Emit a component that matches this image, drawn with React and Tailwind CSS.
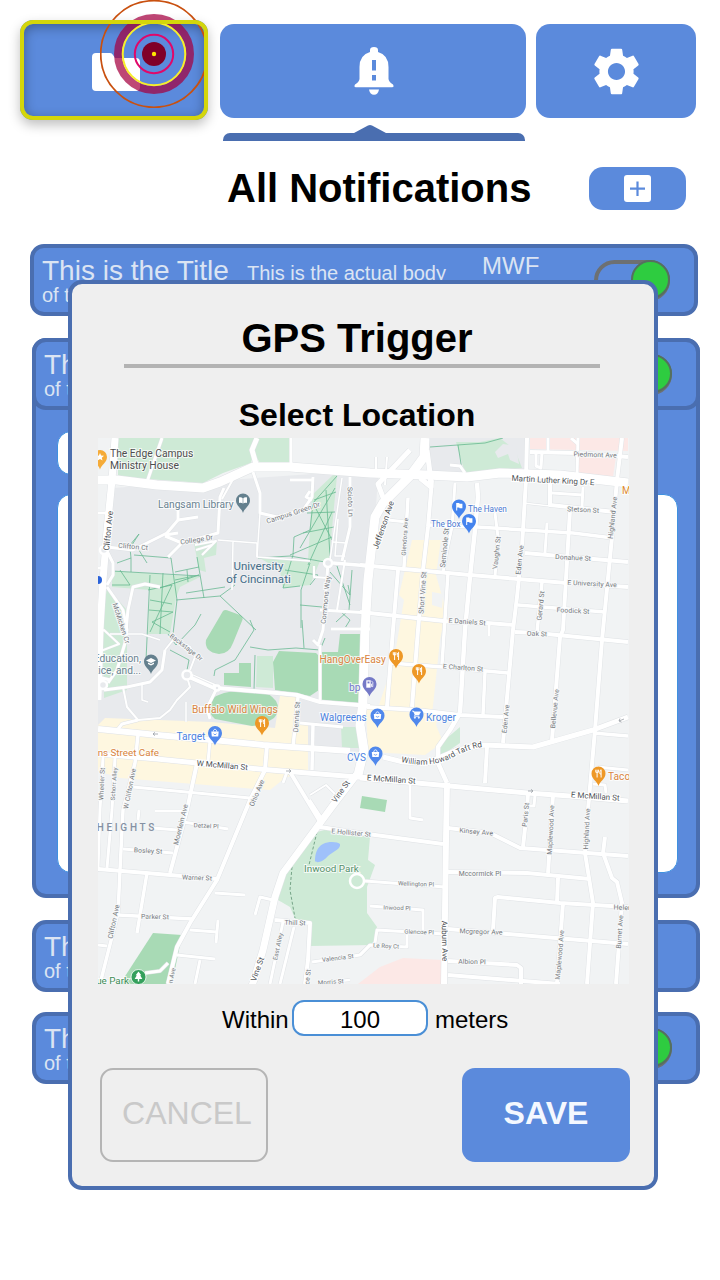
import React from "react";
import { MdSettings } from "react-icons/md";

/* Map geometry: [stroke width, points] */
const ROADS = [
  [1.5, "260,513 257,557"], [1.5, "218,540 257,543 257,557 310,561"], [1.5, "233,542 232,590"],
  [1.5, "342,478 330,560"], [1.5, "338,519 335,556 345,556"], [1.5, "333,542 346,543"],
  [1.5, "110,634 142,634 160,640"], [1.5, "142,685 142,700 148,702"], [1.5, "186,702 186,722"],
  [3, "162,438 147,482"], [5, "257,438 252,450 256,464"], [3, "291,438 291,467"],
  [3, "253,472 260,493 260,513 277,517 303,510 312,497 313,477"], [3, "290,480 313,480"],
  [3, "312,500 306,497 310,491"],
  [3, "98,513 108,513"], [3, "98,568 104,568"], [3, "107,547 133,550 167,533 178,520 178,503"], [3, "178,520 198,517"],
  [3, "165,535 178,533"], [3, "165,536 182,543 168,557"], [3, "182,543 218,533 220,497 224,488"],
  [2, "222,499 227,490 236,474"], [2, "195,545 216,541 202,555"], [2, "196,550 212,545"],
  [3, "106,549 113,563 113,575 107,585"], [3, "107,587 123,610 127,630 125,643 117,670 108,683"],
  [3, "104,690 102,678 110,680"], [3, "160,587 145,584 133,587 128,610 126,630"],
  [3, "328,563 323,630 318,645 313,640"], [3.5, "333,563 370,566"], [3, "350,477 350,527 342,561"],
  [3, "320,610 370,613"], [2, "314,566 314,577 328,578"], [2, "345,560 337,610"],
  [2, "98,634 104,630 119,644 98,652"],
  [2, "165,650 173,640 190,647 195,657 190,670"], [3, "165,650 162,670 150,682 127,687 104,690"],
  [2, "123,687 127,707 138,720 160,718 170,710 177,700 190,687 187,677"], [3, "138,720 122,724 118,729"],
  [6, "187,675 217,688"], [4, "217,688 277,693 297,695 320,702 370,706"], [3, "217,688 207,708 210,719"],
  [3, "320,645 320,700"], [3, "331,629 370,629"],
  [6, "98,729 157,735 223,741 263,745 350,751"], [5, "98,754 157,759 197,763 270,770 370,778"],
  [3.5, "138,735 135,763 123,810 120,870 118,913 100,984"], [3, "103,757 100,810 98,868"], [3, "115,757 112,810 107,868"],
  [3, "210,740 208,762"], [4, "267,745 265,770 250,800 217,880 190,923 177,947 168,984"],
  [3.5, "298,697 293,747"], [3.5, "313,725 312,770"], [3, "300,723 343,727"],
  [4, "197,763 187,810 170,873"], [3, "133,787 250,798"], [4, "290,772 322,825"], [3, "287,772 283,783"],
  [2, "310,795 326,785 335,794"], [4, "309,800 322,820"],
  [5, "410,450 378,484 384,500"], [5, "427,450 430,473 431,487 420,478"], [2, "387,457 385,485"], [2, "376,457 376,470"],
  [4, "432,480 428,527 423,570 418,630 412,707"], [3, "455,483 452,527 447,550 443,573"],
  [3.5, "448,573 442,664"], [4.5, "477,483 478,497 475,530 470,577 465,630 460,713"],
  [4.5, "460,713 450,730 438,747 438,763 447,783"], [3, "495,513 498,537 495,577"],
  [4, "527,438 526,480 522,547 517,597 513,630 503,743"], [3.5, "428,525 477,527 573,533 613,538"],
  [4, "360,565 470,575 567,583 628,587"], [4, "360,612 453,622 487,623 515,625"], [4, "515,632 537,633 628,642"],
  [3.5, "390,663 443,667 508,673"], [4, "367,707 417,710 460,715 503,717"], [3.5, "485,672 483,715"],
  [3, "489,625 489,636"], [4, "398,570 393,630 387,707"], [3.5, "408,498 404,567"], [3, "388,520 407,522"],
  [4, "525,553 628,562"], [3, "547,523 545,553"], [4, "570,510 563,630 560,637 552,740"],
  [4, "622,438 617,480 612,537 603,630 602,640 595,730 588,810 585,853 593,903 587,984"],
  [4, "530,452 577,453 628,457"], [3, "536,452 536,466 541,468 542,452"], [3, "578,438 577,475"], [3, "548,438 548,452"],
  [3, "571,438 578,444"], [4, "550,482 550,505 615,512"], [3, "552,493 583,495"], [3, "583,487 582,507"],
  [1.5, "523,503 550,506"], [3, "450,465 460,466 465,473"],
  [3.5, "518,605 605,612"], [3.5, "542,582 537,632"],
  [5, "383,757 403,762 427,763 457,750 483,745 533,747 593,730 628,717"],
  [4, "487,747 485,783"], [3, "410,783 410,818 423,820"], [3.5, "593,733 628,736"], [3, "597,767 628,770"],
  [3, "593,784 605,785 606,793"], [4, "528,793 527,810 523,847"], [3, "535,795 534,806 528,806"], [4, "553,795 548,873"],
  [5, "360,778 417,783 527,793 570,796 628,801"],
  [4, "320,827 360,833 443,844"], [4, "448,828 490,833 520,848 628,856"], [4, "448,872 527,873 590,879"],
  [4, "558,878 557,902"], [4, "493,930 495,898 498,897 560,903 628,907"], [3, "365,881 445,887"],
  [3, "370,906 423,910 423,930"], [3, "375,943 377,930 445,934"], [3, "360,955 370,945 407,947 407,933"],
  [4, "448,929 628,944"], [4, "448,961 517,965 521,968 521,984"], [4, "448,975 560,984"], [4, "563,903 557,984"],
  [4, "605,837 603,853 612,878 617,882 622,903 616,984"],
  [4, "98,869 218,879"], [3, "123,849 173,853"], [3, "183,822 228,829"], [3, "153,828 177,830"], [3, "139,810 138,820"],
  [3, "155,811 182,811"], [3.5, "147,873 137,933"], [3.5, "118,915 193,919"], [3, "168,963 160,971 145,973"],
  [3, "215,893 245,895"], [3, "190,930 217,932"], [3, "218,920 216,943"], [3, "177,955 215,959"], [3, "200,960 195,984"],
  [3, "98,945 107,946"], [4, "275,920 310,923 308,960 305,984"], [3, "283,922 270,984"], [3, "294,927 280,984"],
  [3, "312,962 360,955 370,945"], [3, "255,915 260,897 273,900"], [2.5, "318,983 350,980"],
  [6, "447,783 446,840 444,984"],
  [7, "357,774 337,800 320,823 283,873 275,897 263,950 252,986"],
  [7, "115,438 112,480 107,530 103,580 100,630 98,700"],
  [9, "98,480 117,480 157,485 203,488 220,482 253,467 290,467 370,473 427,475 467,477 500,473 560,475 628,483"],
  [9, "425,438 424,457 410,476 383,503 375,517 368,580 365,630 363,703 360,725 364,750 358,775"],
];

const AREAS = [
  ["#e8eaed", "98,489 370,470 378,478 362,700 360,752 98,726"],
  ["#e8eaed", "427,438 527,438 527,472 432,474"],
  ["#f1f3f4", "98,484 108,484 102,620 98,620"],
  ["#ceead6", "118,438 257,438 251,463 223,473 203,483 118,477"],
  ["#ceead6", "254,438 290,438 290,464 260,463 253,452"],
  ["#ceead6", "456,442 480,442 500,438 515,450 522,468 465,473"],
  ["#e8eaed", "495,452 503,444 516,446 519,464 510,460 508,454 498,458"],
  ["#fce8e6", "530,438 628,438 628,451 530,449"], ["#fce8e6", "579,454 616,456 613,477 577,474"],
  ["#ceead6", "333,475 337,475 329,561 308,560 312,495"], ["#ceead6", "258,557 320,561 310,585 283,588 280,570"],
  ["#ceead6", "112,571 200,577 180,587 176,598 170,634 148,634 150,590 112,587"],
  ["#ceead6", "107,588 127,610 127,690 104,698 102,620"], ["#ceead6", "194,543 217,541 216,555 204,558 206,572 199,570"],
  ["#a8dab5", "239,663 251,663 251,687 224,685 224,673 239,673"], ["#ceead6", "257,656 273,656 273,688 256,687"],
  ["#a8dab5", "279,651 316,653 319,656 319,690 310,696 275,690 273,662"], ["#a8dab5", "340,634 362,634 360,703 321,700 321,652 338,652"],
  ["#fef7e0", "105,718 212,722 275,728 280,696 297,697 295,722 308,724 308,770 285,778 270,790 120,778 98,771 98,725"],
  ["#fef7e0", "412,540 441,540 436,575 446,610 440,640 432,715 378,708 394,660 404,600 399,595"],
  ["#f1f3f4", "432,592 443,594 442,608 432,605"],
  ["#fef7e0", "366,708 438,714 436,725 443,742 425,755 368,752"],
  ["#ceead6", "341,727 358,727 360,748 342,748"], ["#ceead6", "460,727 460,743 438,758 440,744"],
  ["#a8dab5", "362,796 387,800 385,812 360,808"],
  ["#ceead6", "317,832 332,828 370,837 368,860 375,865 367,887 367,913 377,927 373,945 310,946 308,925 297,923 290,907 278,900 283,877"],
  ["#a8dab5", "153,933 182,935 172,984 120,984"],
  ["#fce8e6", "358,984 380,967 403,958 443,960 443,984"],
];

const PATHS = [
  "117,563 131,558 130,548 139,534 130,545", "131,558 131,572", "137,547 147,563", "134,555 171,558 177,600 173,634",
  "112,571 200,576", "197,557 204,598", "175,572 199,567", "175,580 199,575 160,588", "187,570 188,582", "148,590 172,585 150,632",
  "150,600 172,604", "149,610 173,612 152,622 170,632", "150,575 146,660", "163,573 160,634",
  "176,600 220,596 256,630", "220,596 235,585", "186,593 225,587",
  "120,570 130,585 112,585", "337,476 313,503 310,530 294,537 293,555 283,588 300,586", "314,500 336,492",
  "307,513 335,512", "303,533 334,527", "290,555 332,537", "335,488 300,548", "332,512 308,565", "326,490 330,556", "313,503 332,540",
  "258,558 290,556 325,562", "310,585 318,575 285,570", "310,563 301,590 301,628", "300,605 322,607", "330,572 350,595 348,585", "337,566 350,605",
  "352,570 349,610 336,622", "341,612 350,620 345,628", "170,650 189,660 187,670", "168,634 176,645 195,625 201,614",
  "250,620 254,630 235,660 215,670 214,676", "250,647 268,650 296,648 320,650", "255,655 254,690", "302,620 304,648", "320,650 325,638",
  "430,447 485,443 503,438", "458,445 462,470",
];

/* [text, x, y, rotation, size, kind] */
const LABELS = [
  ["Clifton Ave", 111, 531, -84, 8.3, "m"], ["Clifton Ct", 133, 549, 5, 7, "s"], ["College Dr", 197, 542, -9, 7, "s"],
  ["Campus Green Dr", 294, 515, -18, 7, "s"], ["Scioto Ln", 348, 502, 88, 7, "s"], ["Commons Way", 328, 600, -84, 7, "s"],
  ["McMicken Cr", 119, 624, 72, 7, "s"], ["Backstage Dr", 185, 649, 38, 6.5, "s"], ["Dennis St", 299, 717, -86, 7, "s"],
  ["Jefferson Ave", 386, 526, -71, 8.2, "m"], ["Glendora Ave", 407, 537, -86, 6.2, "s"], ["Seminole St", 447, 548, -84, 7.3, "s"],
  ["Short Vine St", 425, 593, -86, 7.1, "s"], ["Vaughn St", 499, 553, -84, 7, "s"], ["Eden Ave", 522, 560, -84, 7, "s"],
  ["Gerard St", 543, 606, -84, 7, "s"], ["Highland Ave", 615, 518, -84, 7, "s"], ["Piedmont Ave", 595, 457, 2, 6.8, "s"],
  ["Martin Luther King Dr E", 553, 483, 3, 8.1, "m"], ["Stetson St", 583, 512, 3, 6.8, "s"], ["Donahue St", 573, 560, 3, 6.8, "s"],
  ["E University Ave", 592, 586, 3, 6.8, "s"], ["Foodick St", 573, 613, 3, 6.8, "s"], ["E Daniels St", 467, 624, 4, 6.8, "s"],
  ["Oak St", 537, 636, 2, 6.8, "s"], ["E Charlton St", 463, 670, 4, 6.8, "s"], ["Eden Ave", 508, 719, -84, 6.8, "s"],
  ["Bellevue Ave", 557, 709, -84, 6.8, "s"],
  ["W McMillan St", 222, 768, 5, 8, "m"], ["E McMillan St", 391, 782, 4, 8, "m"], ["E McMillan St", 595, 799, 4, 8, "m"],
  ["Vine St", 343, 793, -54, 8, "m"], ["Vine St", 260, 970, -70, 8, "m"], ["Ohio Ave", 259, 794, -67, 7, "s"],
  ["Wheeler St", 104, 784, -87, 6.6, "s"], ["Schorr Alley", 116, 784, -86, 6, "s"], ["W Clifton Ave", 132, 789, -79, 6.7, "s"],
  ["Moerlein Ave", 183, 825, -76, 7, "s"], ["Detzel Pl", 206, 828, 3, 6.2, "s"], ["Bosley St", 148, 853, 3, 6.7, "s"],
  ["Warner St", 197, 880, 2, 6.7, "s"], ["Parker St", 155, 919, 1, 6.7, "s"], ["Clifton Ave", 116, 922, -78, 7, "s"],
  ["East Alley", 280, 947, -78, 6.2, "s"], ["Thill St", 295, 925, 2, 6.7, "s"], ["Valencia St", 338, 960, -7, 6.2, "s"],
  ["ce St", 310, 977, -84, 6.7, "s"], ["n Ave", 174, 976, -78, 6.2, "s"], ["Morris St", 331, 984, -4, 6.2, "s"],
  ["E Hollister St", 351, 835, 5, 6.7, "s"], ["Kinsey Ave", 476, 834, 5, 6.8, "s"], ["Mccormick Pl", 480, 876, 0, 6.8, "s"],
  ["Wellington Pl", 416, 886, 2, 6, "s"], ["Inwood Pl", 397, 910, 2, 6, "s"], ["Glencoe Pl", 419, 934, 2, 6, "s"],
  ["Le Roy Ct", 386, 948, 3, 6, "s"], ["Auburn Ave", 442, 941, 89, 8, "m"], ["Mcgregor Ave", 481, 934, 2, 6.8, "s"],
  ["Albion Pl", 472, 964, 1, 6.8, "s"], ["Paris St", 528, 815, -84, 6.8, "s"], ["Maplewood Ave", 553, 830, -87, 6.8, "s"],
  ["Highland Ave", 589, 829, -87, 6.8, "s"], ["Maplewood Ave", 562, 955, -85, 6.8, "s"], ["Burnet Ave", 622, 932, -86, 6.8, "s"],
  ["Helen St", 627, 910, 2, 7, "s"],
];

const PLACES = [
  ["The Edge Campus", 110, 456.5, 10.3, "#4e4e4e", "start"], ["Ministry House", 110, 468.5, 10.3, "#4e4e4e", "start"],
  ["Langsam Library", 158, 507.5, 10.2, "#6a8391", "start"], ["The Haven", 468, 512, 8.2, "#4b78d2", "start"],
  ["The Box", 431, 527, 8.2, "#4b78d2", "start"], ["HangOverEasy", 319.5, 662.5, 10.2, "#d98441", "start"],
  ["bp", 349, 691, 10.2, "#7276c9", "start"], ["Walgreens", 320, 721, 10, "#4a82df", "start"],
  ["Kroger", 426, 720.5, 10.1, "#4a82df", "start"], ["CVS", 347, 761, 10, "#4a82df", "start"],
  ["Target", 176.5, 739.5, 10.2, "#4a82df", "start"], ["Buffalo Wild Wings", 192, 712.5, 10.2, "#d98441", "start"],
  ["ns Street Cafe", 159, 756, 9.8, "#d98441", "end"], ["Taco", 608, 780, 10.2, "#d98441", "start"],
  ["Education,", 141, 662, 10.2, "#6a8391", "end"], ["tice, and...", 141, 673.5, 10.2, "#6a8391", "end"],
  ["M", 622, 494, 10, "#e08a2e", "start"], ["Inwood Park", 304, 872, 9.9, "#55906a", "start"],
  ["ue Park", 129, 984, 9.8, "#3d8b55", "end"],
];

const ORANGE = "#ee9826";
const BLUE = "#5088ec";
const SLATE = "#64808e";
const PINS = [
  [100, 457, "#f5ab38", "star"], [243, 500.5, SLATE, "book"], [151, 661.5, SLATE, "school"], [459, 506.5, "#4584ee", "flag"],
  [469, 521, "#4584ee", "flag"], [396, 656, ORANGE, "food"], [419, 671, ORANGE, "food"], [369.5, 684, "#7479c7", "gas"],
  [377.5, 715.5, BLUE, "bag"], [416.5, 714.5, BLUE, "cart"], [375.5, 753.5, BLUE, "bag"], [215, 733, BLUE, "bag"],
  [262, 723, ORANGE, "food"], [598.5, 773.5, ORANGE, "food"],
];

const GLYPHS = {
  star: <path d="M0-4 1.1-1.4 4-1.2 1.8.7 2.5 3.5 0 2-2.5 3.5-1.8.7-4-1.2-1.1-1.4Z" fill="#fff" />,
  book: <path d="M-4-3C-2.5-3.4-1-3-.3-2.3V3C-1 2.3-2.5 2.2-4 2.5ZM4-3C2.5-3.4 1-3 .3-2.3V3C1 2.3 2.5 2.2 4 2.5Z" fill="#fff" />,
  school: <path d="M0-3.5 5-1 0 1.5-5-1ZM-3 1 0 2.5 3 1V2.5L0 4-3 2.5Z" fill="#fff" />,
  flag: <path d="M-2.8-3.5H.2L.6-2.7H3.4V1.8H.6L.2 1H-1.8V4H-2.8Z" fill="#fff" />,
  food: <path d="M-2.7-3.8V-1.2M-1.4-3.8V4M-.1-3.8V-1.2M-2.7-1.2H-.1M2.6-3.8C1.2-3 1.2-1 1.5.5H2.6M2.6-3.8V4" stroke="#fff" strokeWidth="1" fill="none" />,
  gas: (
    <g>
      <path d="M-3.2-3.7H1.2V3.7H-3.2Z" fill="#fff" />
      <path d="M-2-2.5H0V-.6H-2Z" fill="#7479c7" />
      <path d="M1.2 0H2V2.6H3.3V-1.6L1.9-3.2" fill="none" stroke="#fff" strokeWidth=".8" />
    </g>
  ),
  bag: (
    <g>
      <path d="M-3.7-1.4H3.7L3.2 3.6H-3.2Z" fill="#fff" />
      <path d="M-1.7-1.4C-1.7-4.4 1.7-4.4 1.7-1.4" fill="none" stroke="#fff" strokeWidth=".9" />
      <path d="M-1.5 .6C-1 2 1 2 1.500 .6" fill="none" stroke="#5088ec" strokeWidth=".8" />
    </g>
  ),
  cart: (
    <g fill="#fff" stroke="#fff" strokeWidth=".8">
      <path d="M-4-3.4H-2.9L-1.4.4H2.4L3.9-2.6H-2.4Z" />
      <path d="M-1.4.4-2.2 1.8H3" fill="none" />
      <circle cx="-1.6" cy="3.2" r=".6" /><circle cx="2.3" cy="3.2" r=".6" />
    </g>
  ),
};

function CampusMap() {
  return (
    <svg viewBox="98 438 531 546" className="mx-auto mt-[7px] block h-[546px] w-[531px] shrink-0" fontFamily="Roboto, sans-serif" aria-label="Map">
      <rect x="98" y="438" width="531" height="546" fill="#f1f3f4" />
      {AREAS.map(([fill, points], i) => <polygon key={i} points={points} fill={fill} />)}
      <path d="M223 611Q225 609 229 611L240 615Q244 617 242 621L233 643Q229 654 219 654Q204 652 206 640Z" fill="#a8dab5" />
      <path d="M212 699Q222 691 240 691H258Q270 693 276 701Q281 710 274 718Q264 725 252 726L215 719Q204 709 212 699Z" fill="#a8dab5" />
      <path d="M323 844C329 841 338 842 340 844C341 849 334 851 328 856C324 861 317 864 315 861C315 854 317 847 323 844Z" fill="#9fc1fa" />
      <g fill="none" stroke="#54b184" strokeWidth=".8" opacity=".85">
        {PATHS.map((p, i) => <polyline key={i} points={p} />)}
      </g>
      <path d="M317 832 309 865M292 867 290 890 295 918" stroke="#76a588" strokeDasharray="3 2" fill="none" />
      <g fill="none" stroke="#dfe2e5" strokeLinejoin="round">
        {ROADS.map(([w, p], i) => <polyline key={i} points={p} strokeWidth={w + 0.9} />)}
      </g>
      <g fill="none" stroke="#fff" strokeLinejoin="round">
        {ROADS.map(([w, p], i) => <polyline key={i} points={p} strokeWidth={w} />)}
      </g>
      <g fill="#e8eaed" stroke="#fff" strokeWidth="2.5">
        <circle cx="187" cy="675" r="4.5" /><circle cx="217" cy="688" r="2.5" /><circle cx="328" cy="563" r="4" />
        <circle cx="103" cy="685" r="4" /><circle cx="104" cy="550" r="4" />
        <circle cx="357" cy="881" r="7" fill="#ceead6" />
      </g>
      <path d="M193 676 213 685" stroke="#e8eaed" strokeWidth="1" />
      <path d="M98 576a4 4 0 0 1 0 8Z" fill="#2a62d9" />
      <g fill="none" stroke="#9aa0a6" strokeWidth=".8">
        <path d="M153 734h5m-5 0 2-1.7m-2 1.7 2 1.7M286 771h5m0 0-2-1.7m2 1.7-2 1.7M528 791h5m0 0-2-1.7m2 1.7-2 1.7M619 721l5-2m-5 2 1-2.5m-1 2.5 2.5 1" />
      </g>
      {LABELS.map(([t, x, y, r, s, k], i) => (
        <text key={i} transform={`translate(${x} ${y}) rotate(${r})`} textAnchor="middle" fontSize={s} letterSpacing={k === "m" ? 0 : 0.1}
          fill={k === "m" ? "#4f5357" : "#75797d"} stroke={k === "m" ? "#fff" : "#f7f8f9"} strokeWidth="2" paintOrder="stroke">{t}</text>
      ))}
      <path id="taft" d="M401 762Q431 769 454 757Q468 749 482 747" fill="none" />
      <text fontSize="8.100" fill="#4f5357" stroke="#fff" strokeWidth="2" paintOrder="stroke">
        <textPath href="#taft">William Howard Taft Rd</textPath>
      </text>
      <g fontSize="11.500" fill="#456d88" stroke="#eef0f2" strokeWidth="2" paintOrder="stroke" textAnchor="middle">
        <text x="258.500" y="569.500">University</text>
        <text x="258.500" y="582.500">of Cincinnati</text>
      </g>
      <text x="157" y="831" textAnchor="end" fontSize="10" fontWeight="500" letterSpacing="2.700" fill="#8490a3">HEIGHTS</text>
      {PLACES.map(([t, x, y, s, c, a], i) => (
        <text key={i} x={x} y={y} fontSize={s} fill={c} textAnchor={a} stroke="#fff" strokeOpacity=".75" strokeWidth="2" paintOrder="stroke">{t}</text>
      ))}
      {PINS.map(([x, y, c, icon], i) => (
        <g key={i} transform={`translate(${x} ${y})`}>
          <path d="M0 12.500C-1 8-7 5.500-7 0a7 7 0 0 1 14 0C7 5.500 1 8 0 12.500Z" fill={c} />
          {GLYPHS[icon]}
        </g>
      ))}
      <circle cx="138.500" cy="977" r="7.500" fill="#34a05c" stroke="#fff" strokeWidth=".8" />
      <path d="M138.500 971.500 141.300 975.300H140.200L142.300 979H139.200V981.500H137.800V979H134.700L136.800 975.300H135.700Z" fill="#fff" />
    </svg>
  );
}

function Toggle() {
  return (
    <div className="absolute top-[12px] right-[24px] h-[41px] w-[76px] rounded-full border-4 border-[#6d7072]">
      <div className="absolute -top-[4px] -right-[4px] size-[39px] rounded-full border-2 border-[#55705f] bg-[#2ecc40]" />
    </div>
  );
}

function NotificationCard({ toggle = true, className = "" }) {
  return (
    <div className={`relative h-[72px] w-[668px] shrink-0 rounded-[14px] border-4 border-[#4a6eb0] bg-[#5b8adc] text-[#dbe4f3] ${className}`}>
      <div className="flex h-full items-start pl-[8px]">
        <div className="w-[205px]">
          <p className="pt-[9px] text-[28px] leading-[28px] whitespace-nowrap">This is the Title</p>
          <p className="pt-px text-[20px] leading-[18px] whitespace-nowrap">of the notification</p>
        </div>
        <p className="w-[235px] pt-[15px] text-[20px] leading-[20px]">This is the actual body</p>
        <p className="pt-[6px] text-[24px] leading-[24px]">MWF</p>
      </div>
      {toggle && <Toggle />}
    </div>
  );
}

function BellIcon() {
  return (
    <svg viewBox="354 48 40 48" className="ml-[2px] h-[48px] w-[40px]" fill="#fff">
      <path fillRule="evenodd" d="M370 53V51Q370 48 374 48T378 51V53Q388.500 56 388.500 68V80Q389 83 393 85.500Q394.500 88.300 392 88.300H356Q353.500 88.300 355 85.500Q359 83 359.500 80V68Q359.500 56 370 53ZM372 61V71.500H376V61ZM372 76V81.500H376V76Z" />
      <path d="M369 90.500H379Q378 95.800 374 95.800T369 90.500Z" />
    </svg>
  );
}

function Header() {
  return (
    <header className="flex items-start pt-[20px] pl-[20px]">
      <button className="relative flex h-[100px] w-[188px] items-center justify-center rounded-[13px] bg-[#5b8adc] shadow-[0_5px_12px_rgba(0,0,0,0.25)]">
        <span className="absolute inset-[4px] rounded-[9px] shadow-[inset_0_3px_12px_rgba(0,0,0,0.32)]" />
        <svg viewBox="0 0 48 38" className="mb-[-4px] ml-[4px] h-[38px] w-[48px]" fill="#fff">
          <path d="M4 0H18Q20 0 21 2L23 5H44Q48 5 48 9V34Q48 38 44 38H4Q0 38 0 34V4Q0 0 4 0Z" />
        </svg>
        <svg viewBox="100 0 106 108" className="absolute -top-[20px] left-[80px] h-[108px] w-[106px]" fill="none">
          <circle cx="154" cy="54" r="53.300" stroke="#c9500f" strokeWidth="1.800" />
          <circle cx="154" cy="54" r="36" stroke="#a50040" strokeOpacity=".72" strokeWidth="8" />
          <circle cx="154" cy="54" r="31.300" stroke="#f8ee2a" strokeWidth="2" />
          <circle cx="154" cy="54" r="19.200" stroke="#e0086a" strokeWidth="2" />
          <circle cx="154" cy="54" r="12" fill="#800028" />
          <circle cx="154" cy="54" r="2.200" fill="#ffe600" />
        </svg>
        <span className="absolute inset-0 rounded-[13px] border-4 border-[#d4d60a]" />
      </button>
      <button className="mt-[4px] ml-[12px] flex h-[94px] w-[306px] items-center justify-center rounded-[14px] bg-[#5b8adc]">
        <BellIcon />
      </button>
      <button className="mt-[4px] ml-[10px] flex h-[94px] w-[160px] items-center justify-center rounded-[14px] bg-[#5b8adc] text-white">
        <MdSettings className="mt-px size-[57px]" />
      </button>
    </header>
  );
}

function GpsDialog() {
  return (
    <div role="dialog" className="absolute top-[280px] left-[68px] flex h-[910px] w-[590px] flex-col rounded-[14px] border-4 border-[#4a6eb0] bg-[#efefef] text-black">
      <h2 className="ml-[-12px] pt-[34px] text-center text-[40px] leading-[40px] font-bold">GPS Trigger</h2>
      <hr className="mt-[6px] ml-[52px] h-[4px] w-[476px] border-0 bg-[#b3b3b3]" />
      <h3 className="mt-[31px] ml-[-12px] text-center text-[32px] leading-[32px] font-bold">Select Location</h3>
      <CampusMap />
      <div className="mt-[16px] flex items-center pl-[150px] text-[24px] leading-[28px]">
        <span className="w-[70px] pt-[3px]">Within</span>
        <div className="flex h-[36px] w-[136px] items-center justify-center rounded-[12px] border-2 border-[#4a8fd6] bg-white pt-[3px]">100</div>
        <span className="pt-[3px] pl-[7px]">meters</span>
      </div>
      <div className="mt-[32px] flex justify-between pr-[24px] pl-[28px] text-[32px]">
        <button className="h-[94px] w-[168px] rounded-[13px] border-2 border-[#b5b5b5] pb-[4px] pl-[6px] text-[#c9c9c9]">CANCEL</button>
        <button className="h-[94px] w-[168px] rounded-[13px] bg-[#5b8adc] pb-[4px] font-bold text-[#f4f8ff]">SAVE</button>
      </div>
    </div>
  );
}

export default function App() {
  return (
    <div className="relative flex h-[1280px] w-[720px] flex-col overflow-hidden bg-white font-['Liberation_Sans',Arial,sans-serif]">
      <Header />
      <div className="mt-[5px] ml-[223px] flex w-[302px] flex-col">
        <svg viewBox="0 0 32 8" className="ml-[131px] h-[8px] w-[32px]"><path d="M0 8 14 .6Q16-.5 18 .6L32 8Z" fill="#4a6eb0" /></svg>
        <div className="h-[8px] rounded-t-[7px] bg-[#4a6eb0]" />
      </div>
      <div className="mt-[26px] flex h-[43px] items-center pl-[227px]">
        <h1 className="w-[362px] pb-[2px] text-[40px] leading-[40px] font-bold">All Notifications</h1>
        <button className="flex h-[43px] w-[97px] items-center justify-center rounded-[14px] bg-[#5b8adc]">
          <svg viewBox="0 0 27 27" className="mb-px size-[27px]">
            <rect width="27" height="27" rx="3" fill="#fff" />
            <path d="M13.500 6.500V21M6 13.700H21" stroke="#5b8adc" strokeWidth="2.200" />
          </svg>
        </button>
      </div>
      <main className="mt-[34px] flex flex-col pl-[32px]">
        <NotificationCard className="-ml-[2px]" />
        <section className="mt-[22px] h-[560px] w-[668px] rounded-[14px] border-4 border-[#4a6eb0] bg-[#5b8adc]">
          <NotificationCard className="-mt-[4px] -ml-[4px]" />
          <div className="mt-[21px] ml-[21px] h-[44px] w-[560px] rounded-[14px] border border-[#3f91e0] bg-white" />
          <div className="mt-[19px] ml-[21px] h-[379px] w-[621px] rounded-[14px] border border-[#3f91e0] bg-white" />
        </section>
        <NotificationCard toggle={false} className="mt-[22px]" />
        <NotificationCard className="mt-[20px]" />
      </main>
      <GpsDialog />
    </div>
  );
}
